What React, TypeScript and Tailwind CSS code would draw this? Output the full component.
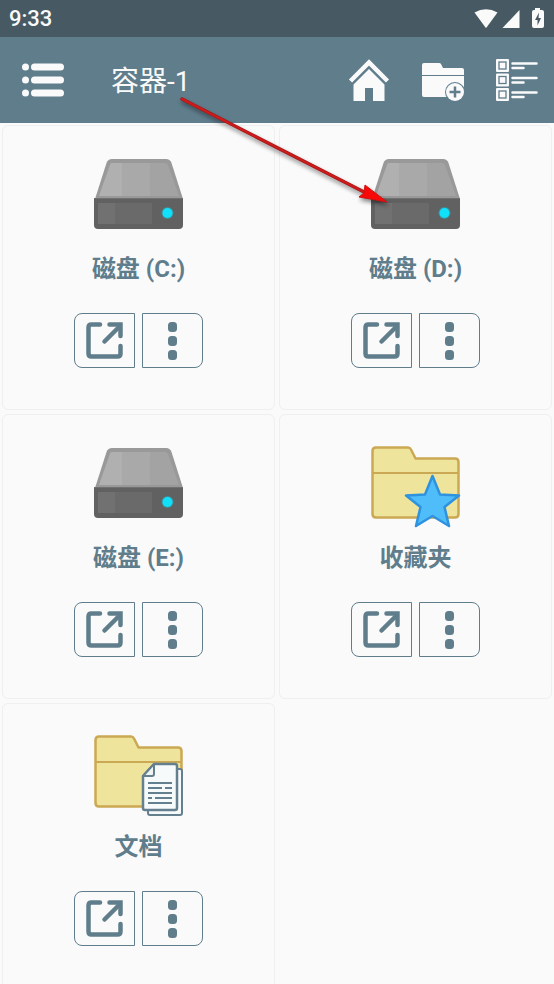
import type { ReactNode } from 'react';

type Kind = 'disk' | 'favorites' | 'documents';

const ITEMS: { name: string; kind: Kind }[] = [
  { name: '磁盘 (C:)', kind: 'disk' },
  { name: '磁盘 (D:)', kind: 'disk' },
  { name: '磁盘 (E:)', kind: 'disk' },
  { name: '收藏夹', kind: 'favorites' },
  { name: '文档', kind: 'documents' },
];

function DiskIcon() {
  return (
    <svg viewBox="0 0 90 84" className="w-[90px] h-[84px]" aria-hidden="true">
      <path d="M18 2H72Q76 2 77.500 6L89 42H1L12.500 6Q14 2 18 2Z" fill="#999999" />
      <path d="M18 6H71Q73 6 74 8L85 39H5L16 8Q16.500 6 18 6Z" fill="#a3a3a3" />
      <path d="M17 6H28V39H5L16 8Z" fill="#b0b0b0" />
      <path d="M28 6H56V39H28Z" fill="#a9a9a9" />
      <path d="M0 41H89V68Q89 72 85 72H4Q0 72 0 68Z" fill="#616161" />
      <path d="M0 41H89V42H0Z" fill="#707070" />
      <path d="M4 46H58V67H4Z" fill="#6a6a6a" />
      <path d="M4 46H21V67H4Z" fill="#717171" />
      <circle cx="73.500" cy="56" r="6" fill="#3f8f98" />
      <circle cx="73.500" cy="56" r="5" fill="#10e0fa" />
    </svg>
  );
}

function FolderShape() {
  return (
    <g stroke="#cba853" strokeWidth="2.500" strokeLinejoin="round">
      <path d="M5 1.500H37Q39 1.500 40 3.500L44.500 12.500H84Q87.500 12.500 87.500 16V68Q87.500 71.500 84 71.500H5Q1.500 71.500 1.500 68V5Q1.500 1.500 5 1.500Z" fill="#eee49b" />
      <path d="M1.500 27H87.500" strokeWidth="2" />
    </g>
  );
}

function FavoritesIcon() {
  return (
    <svg viewBox="0 0 90 84" className="w-[90px] h-[84px]" aria-hidden="true">
      <FolderShape />
      <path
        d="M61.500 30L69 48.500L88 49.500L73.500 61L78 80L61.500 70L45 80L49.500 61L35 49.500L54 48.500Z"
        fill="#4fbdfa"
        stroke="#2f92de"
        strokeWidth="2.500"
        strokeLinejoin="round"
      />
    </svg>
  );
}

function DocumentsIcon() {
  return (
    <svg viewBox="0 0 90 84" className="w-[90px] h-[84px]" aria-hidden="true">
      <FolderShape />
      <g stroke="#64808f" strokeWidth="2" strokeLinejoin="round">
        <path d="M56 34H86Q88 34 88 36V78Q88 80 86 80H56Q54 80 54 78V36Z" fill="#f7fafb" />
        <path d="M60 29H81Q83 29 83 31V73Q83 75 81 75H51Q49 75 49 73V41Z" fill="#f7fafb" strokeWidth="2.500" />
        <path d="M60 29V39Q60 41 58 41H49Z" fill="#eef3f5" />
        <path d="M54 48H78M54 53H68M71 53H78M54 58H78M54 63H58M61 63H78M54 68H78" />
      </g>
    </svg>
  );
}

const ICONS: Record<Kind, ReactNode> = {
  disk: <DiskIcon />,
  favorites: <FavoritesIcon />,
  documents: <DocumentsIcon />,
};

function StatusBar() {
  return (
    <div className="flex items-center justify-between h-[37px] pl-[9px] pr-2 bg-[#475a64] text-[#fafafa]">
      <span className="text-[22px] leading-7 font-medium">9:33</span>
      <svg viewBox="0 0 72 24" className="w-[72px] h-6" fill="currentColor" aria-hidden="true">
        <path d="M.5 5.500Q12 -1 23.500 5.500L12.500 20.500Q12 21 11.500 20.500Z" />
        <path d="M45.500 3V21H28.500Z" />
        <path d="M61 1H66V3H68Q70 3 70 5V19Q70 21 68 21H60Q58 21 58 19V5Q58 3 60 3H61Z" />
        <path d="M65 5.500L61 13H63.500V18.500L67 11H64.500Z" fill="#475a64" />
      </svg>
    </div>
  );
}

function AppBar() {
  return (
    <header className="flex items-center h-[86px] pl-[22px] pr-4 bg-[#607d8c] text-[#fafafa]">
      <button type="button" aria-label="Menu">
        <svg viewBox="0 0 42 42" className="w-[42px] h-[42px]" fill="currentColor" aria-hidden="true">
          <circle cx="3.500" cy="8" r="3.500" />
          <circle cx="3.500" cy="21" r="3.500" />
          <circle cx="3.500" cy="34" r="3.500" />
          <rect x="9" y="4.500" width="33" height="7" rx="3.500" />
          <rect x="9" y="17.500" width="33" height="7" rx="3.500" />
          <rect x="9" y="30.500" width="33" height="7" rx="3.500" />
        </svg>
      </button>
      <h1 className="ml-[47px] pt-1 text-[28px] leading-9 font-normal">容器-1</h1>
      <nav className="flex gap-8 ml-auto">
        <button type="button" aria-label="Home">
          <svg viewBox="0 0 42 42" className="w-[42px] h-[42px]" aria-hidden="true">
            <path d="M2.500 22L21 3.500L39.500 22" fill="none" stroke="currentColor" strokeWidth="4.500" />
            <path d="M21 10L36.500 25.500V42H25V29H17V42H5.500V25.500Z" fill="currentColor" />
          </svg>
        </button>
        <button type="button" aria-label="New folder">
          <svg viewBox="0 0 42 42" className="w-[42px] h-[42px]" fill="currentColor" aria-hidden="true">
            <path d="M2 4H17Q18.500 4 19 5L21 9H40Q42 9 42 11V16H0V6Q0 4 2 4Z" />
            <path d="M0 17H42V29H25V38H2Q0 38 0 36Z" />
            <circle cx="33" cy="33" r="10" fill="#607d8c" />
            <circle cx="33" cy="33" r="9" />
            <path d="M33 27.500V38.500M27.500 33H38.500" stroke="#607d8c" strokeWidth="2.500" />
          </svg>
        </button>
        <button type="button" aria-label="View mode">
          <svg viewBox="0 0 42 42" className="w-[42px] h-[42px]" fill="currentColor" aria-hidden="true">
            <rect x="0" y="0" width="13" height="13" rx="1" />
            <rect x="0" y="14.500" width="13" height="13" rx="1" />
            <rect x="0" y="29" width="13" height="13" rx="1" />
            <g fill="none" stroke="#607d8c" strokeWidth="1.300">
              <rect x="3" y="3" width="7" height="7" />
              <rect x="3" y="17.500" width="7" height="7" />
              <rect x="3" y="32" width="7" height="7" />
            </g>
            <path
              d="M16.500 4.500H40.500M16.500 9H27.500M16.500 19H40.500M16.500 23.500H27.500M16.500 33.500H40.500M16.500 38H27.500"
              stroke="currentColor"
              strokeWidth="2.500"
              strokeLinecap="round"
            />
          </svg>
        </button>
      </nav>
    </header>
  );
}

function ItemCard({ name, kind }: { name: string; kind: Kind }) {
  return (
    <li className="flex flex-col items-center pt-[31px] pb-[41px] border border-[#efefef] rounded-md">
      {ICONS[kind]}
      <h2 className="mt-2.5 text-2xl leading-9 font-bold">{name}</h2>
      <div className="flex gap-[7px] mt-[26px]">
        <button
          type="button"
          aria-label={`Open ${name}`}
          className="flex items-center justify-center w-[61px] h-[55px] border border-[#607d8c] rounded-l-lg"
        >
          <svg viewBox="0 0 38 38" className="w-[38px] h-[38px]" fill="none" stroke="currentColor" aria-hidden="true">
            <path d="M14 2.500H5.500Q2.500 2.500 2.500 5.500V31.500Q2.500 34.500 5.500 34.500H31.500Q34.500 34.500 34.500 31.500V24" strokeWidth="4.500" strokeLinecap="round" />
            <path d="M18.500 19.500L33 5" strokeWidth="4.500" strokeLinecap="round" />
            <path d="M23.500 2.500H34.500V14" strokeWidth="4.500" strokeLinecap="round" />
          </svg>
        </button>
        <button
          type="button"
          aria-label={`More actions for ${name}`}
          className="flex items-center justify-center w-[61px] h-[55px] border border-[#607d8c] rounded-r-lg"
        >
          <svg viewBox="0 0 10 38" className="w-[10px] h-[38px]" fill="currentColor" aria-hidden="true">
            <rect width="9" y="0" height="10" rx="3.500" />
            <rect width="9" y="14" height="10" rx="3.500" />
            <rect width="9" y="28" height="10" rx="3.500" />
          </svg>
        </button>
      </div>
    </li>
  );
}

// Hint arrow that points from the container title to the D: disk
function HintArrow() {
  return (
    <svg
      viewBox="0 0 216 116"
      className="absolute left-[176px] top-[94px] w-[216px] h-[116px] pointer-events-none drop-shadow-[1px_3px_2px_rgba(0,0,0,0.45)]"
      aria-hidden="true"
    >
      <path d="M6 5L190 99" stroke="#a51616" strokeWidth="3.500" strokeLinecap="round" />
      <path d="M6 5L190 99" stroke="#cc1c1c" strokeWidth="2" strokeLinecap="round" />
      <path d="M189 91L211 108L183 103L188 99Z" fill="#fa0808" stroke="#d01010" strokeWidth="1" />
    </svg>
  );
}

export default function App() {
  return (
    <div className="relative flex flex-col h-screen overflow-hidden bg-[#fafafa] text-[#607d8c] font-[Roboto,'Noto_Sans_CJK_SC',sans-serif]">
      <StatusBar />
      <AppBar />
      <main className="flex-1 min-h-0 overflow-y-auto [scrollbar-width:none]">
        <ul className="grid grid-cols-2 gap-1 p-0.5">
          {ITEMS.map((item) => (
            <ItemCard key={item.name} name={item.name} kind={item.kind} />
          ))}
        </ul>
      </main>
      <HintArrow />
    </div>
  );
}
